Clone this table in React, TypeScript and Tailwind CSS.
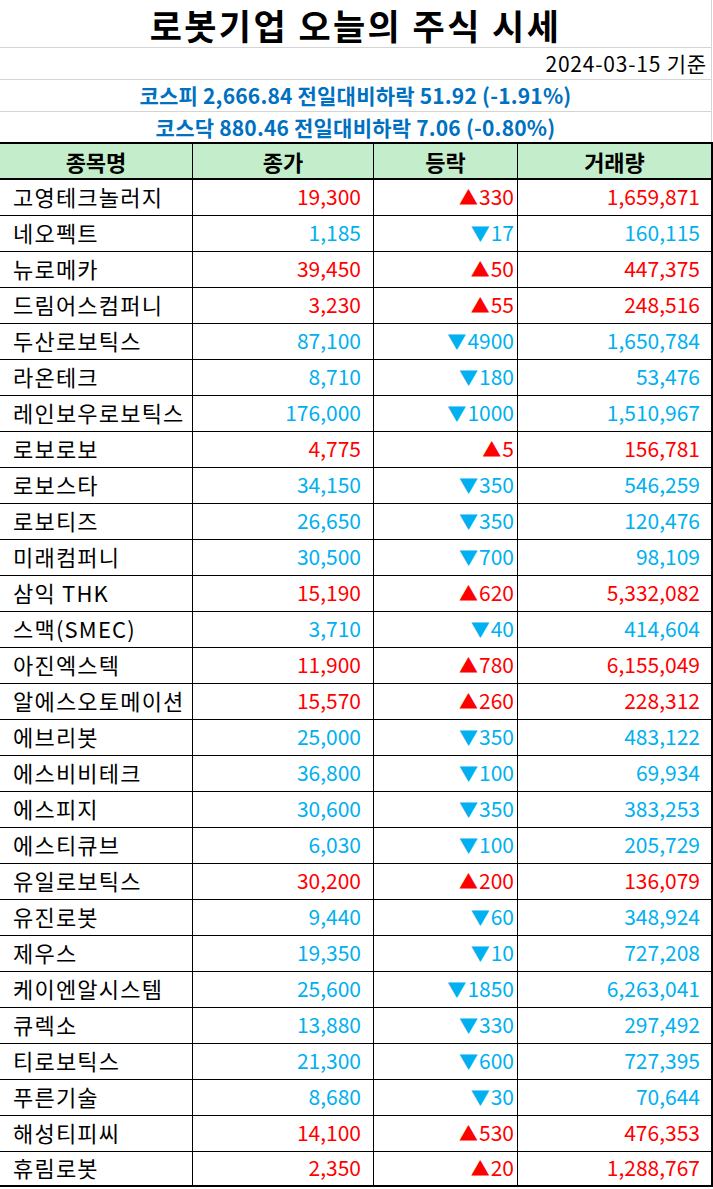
type Stock = {
    name: string
    price: string
    change: string
    volume: string
    up: boolean
}

const stocks: Stock[] = [
    { name: '고영테크놀러지', price: '19,300', change: '330', volume: '1,659,871', up: true },
    { name: '네오펙트', price: '1,185', change: '17', volume: '160,115', up: false },
    { name: '뉴로메카', price: '39,450', change: '50', volume: '447,375', up: true },
    { name: '드림어스컴퍼니', price: '3,230', change: '55', volume: '248,516', up: true },
    { name: '두산로보틱스', price: '87,100', change: '4900', volume: '1,650,784', up: false },
    { name: '라온테크', price: '8,710', change: '180', volume: '53,476', up: false },
    { name: '레인보우로보틱스', price: '176,000', change: '1000', volume: '1,510,967', up: false },
    { name: '로보로보', price: '4,775', change: '5', volume: '156,781', up: true },
    { name: '로보스타', price: '34,150', change: '350', volume: '546,259', up: false },
    { name: '로보티즈', price: '26,650', change: '350', volume: '120,476', up: false },
    { name: '미래컴퍼니', price: '30,500', change: '700', volume: '98,109', up: false },
    { name: '삼익 THK', price: '15,190', change: '620', volume: '5,332,082', up: true },
    { name: '스맥(SMEC)', price: '3,710', change: '40', volume: '414,604', up: false },
    { name: '아진엑스텍', price: '11,900', change: '780', volume: '6,155,049', up: true },
    { name: '알에스오토메이션', price: '15,570', change: '260', volume: '228,312', up: true },
    { name: '에브리봇', price: '25,000', change: '350', volume: '483,122', up: false },
    { name: '에스비비테크', price: '36,800', change: '100', volume: '69,934', up: false },
    { name: '에스피지', price: '30,600', change: '350', volume: '383,253', up: false },
    { name: '에스티큐브', price: '6,030', change: '100', volume: '205,729', up: false },
    { name: '유일로보틱스', price: '30,200', change: '200', volume: '136,079', up: true },
    { name: '유진로봇', price: '9,440', change: '60', volume: '348,924', up: false },
    { name: '제우스', price: '19,350', change: '10', volume: '727,208', up: false },
    { name: '케이엔알시스템', price: '25,600', change: '1850', volume: '6,263,041', up: false },
    { name: '큐렉소', price: '13,880', change: '330', volume: '297,492', up: false },
    { name: '티로보틱스', price: '21,300', change: '600', volume: '727,395', up: false },
    { name: '푸른기술', price: '8,680', change: '30', volume: '70,644', up: false },
    { name: '해성티피씨', price: '14,100', change: '530', volume: '476,353', up: true },
    { name: '휴림로봇', price: '2,350', change: '20', volume: '1,288,767', up: true },
]

function StockRow({ stock, last }: { stock: Stock; last: boolean }) {
    const color = stock.up ? 'text-[#ff0000]' : 'text-[#00b0f0]'
    return (
        <div
            className={
                last
                    ? 'grid h-[35px] grid-cols-[193px_181px_144px_195px] border-b-2 border-black'
                    : 'grid h-[36px] grid-cols-[193px_181px_144px_195px] border-b border-black'
            }
        >
            <div className="flex items-center border-r border-black pb-[3px] pl-[13px] text-[22px] tracking-[1.2px] text-black">
                {stock.name}
            </div>
            <div className={`flex items-center justify-end border-r border-black pb-[3px] pr-[12px] text-[21px] ${color}`}>
                {stock.price}
            </div>
            <div className={`flex items-center justify-end border-r border-black pb-[3px] pr-[3px] text-[21px] ${color}`}>
                <span className="mr-[1px] text-[19px]">{stock.up ? '▲' : '▼'}</span>
                {stock.change}
            </div>
            <div className={`flex items-center justify-end border-r-2 border-black pb-[3px] pr-[11px] text-[21px] ${color}`}>
                {stock.volume}
            </div>
        </div>
    )
}

export default function App() {
    return (
        <div className="w-[713px] bg-white pb-[3px] font-['Noto_Sans_CJK_KR',sans-serif] leading-none">
            <div className="w-[712px] border-r border-[#d4d4d4]">
                <div className="flex h-[48px] items-center justify-center border-b border-[#d4d4d4] pt-[3px] text-[35px] leading-[38px] font-bold tracking-[2.4px] text-black">
                    로봇기업 오늘의 주식 시세
                </div>
                <div className="flex h-[32px] items-center justify-end border-b border-[#d4d4d4] pr-[4px] text-[21px] tracking-[0.8px] text-black">
                    2024-03-15 기준
                </div>
                <div className="flex h-[32px] items-center justify-center border-b border-[#d4d4d4] text-[21px] font-bold tracking-[0.2px] text-[#0070c0]">
                    코스피 2,666.84 전일대비하락 51.92 (-1.91%)
                </div>
                <div className="flex h-[30px] items-center justify-center text-[21px] font-bold tracking-[0.2px] text-[#0070c0]">
                    코스닥 880.46 전일대비하락 7.06 (-0.80%)
                </div>
            </div>
            <div className="grid h-[38px] grid-cols-[193px_181px_144px_195px] border-y-2 border-black bg-[#c4eecb] text-[22px] font-bold text-black">
                <div className="flex items-center justify-center border-r border-black">종목명</div>
                <div className="flex items-center justify-center border-r border-black">종가</div>
                <div className="flex items-center justify-center border-r border-black">등락</div>
                <div className="flex items-center justify-center border-r-2 border-black">거래량</div>
            </div>
            {stocks.map((s, i) => (
                <StockRow key={s.name} stock={s} last={i === stocks.length - 1} />
            ))}
        </div>
    )
}
